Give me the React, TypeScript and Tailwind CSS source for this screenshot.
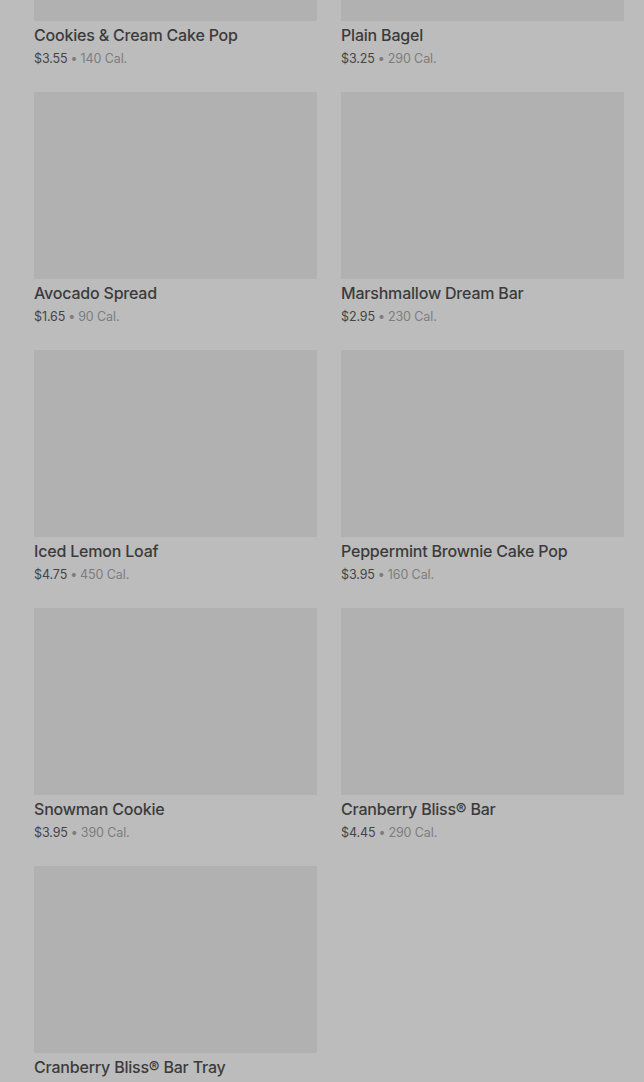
import React from "react";

const items = [
  { name: "Cookies & Cream Cake Pop", price: "$3.55", cal: "140 Cal." },
  { name: "Plain Bagel", price: "$3.25", cal: "290 Cal." },
  { name: "Avocado Spread", price: "$1.65", cal: "90 Cal." },
  { name: "Marshmallow Dream Bar", price: "$2.95", cal: "230 Cal." },
  { name: "Iced Lemon Loaf", price: "$4.75", cal: "450 Cal." },
  { name: "Peppermint Brownie Cake Pop", price: "$3.95", cal: "160 Cal." },
  { name: "Snowman Cookie", price: "$3.95", cal: "390 Cal." },
  { name: "Cranberry Bliss® Bar", price: "$4.45", cal: "290 Cal." },
  { name: "Cranberry Bliss® Bar Tray", price: "$14.95", cal: "2,320 Cal." },
];

export default function App() {
  return (
    <div
      className="h-[1082px] w-[644px] overflow-hidden bg-[#bcbcbc]"
      style={{ fontFamily: "Inter, 'Noto Sans', sans-serif" }}
    >
      <div className="mt-[-166px] grid grid-cols-[283px_283px] gap-x-6 gap-y-[23px] pl-[34px]">
        {items.map((it) => (
          <div key={it.name} className="flex flex-col">
            <div className="h-[187px] w-full bg-[#b1b1b1]" />
            <div className="mt-[3px] text-[16px] font-medium leading-[22px] tracking-[-0.2px] text-[#3b3b3b]">
              {it.name}
            </div>
            <div className="mt-[3px] text-[12.5px] leading-[20px] tracking-[-0.1px] text-[#7c7c7c]">
              <span className="text-[#444]">{it.price}</span>
              <span className="mx-[3px]">•</span>
              {it.cal}
            </div>
          </div>
        ))}
      </div>
    </div>
  );
}
